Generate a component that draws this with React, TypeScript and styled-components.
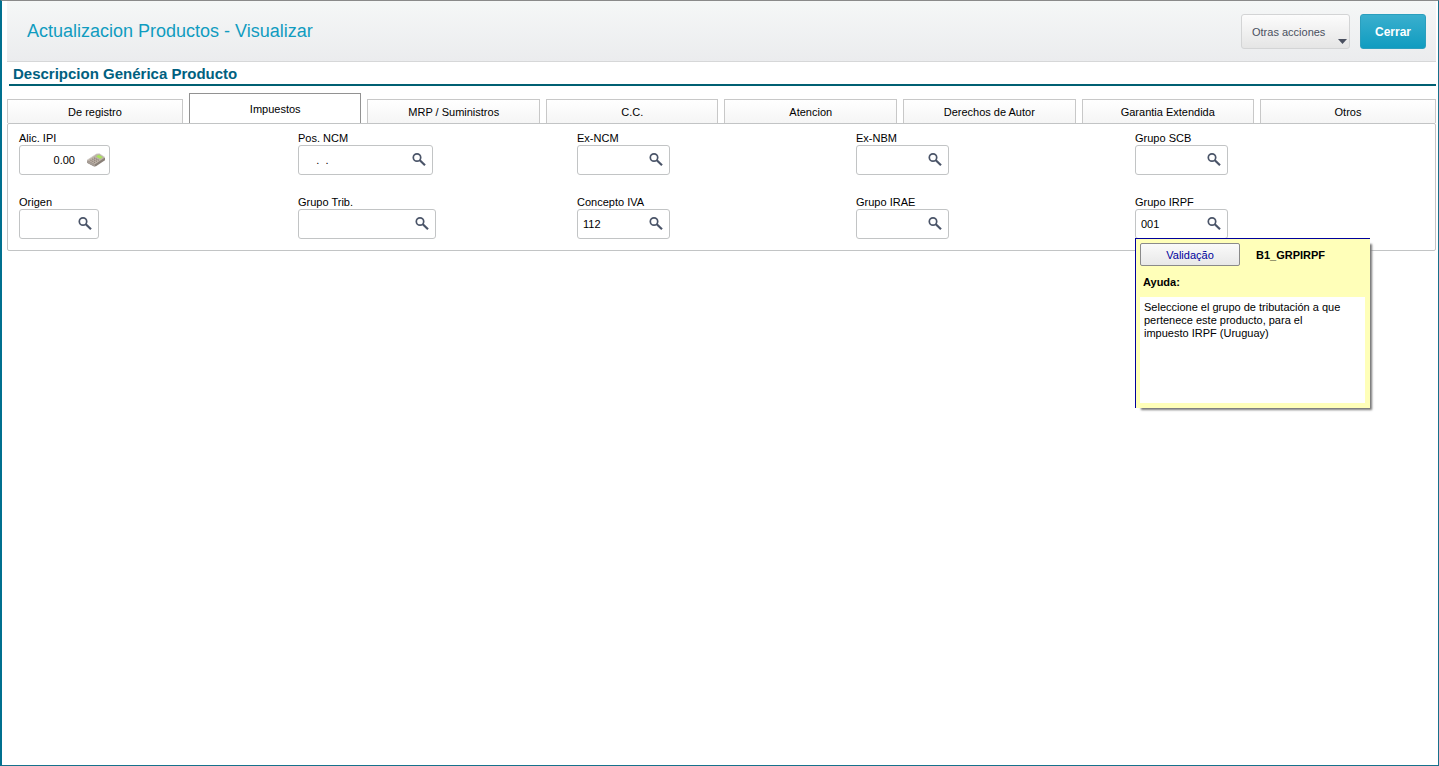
import React from "react";
import styled, { createGlobalStyle, css } from "styled-components";

const GlobalStyle = createGlobalStyle`
  *, *::before, *::after { box-sizing: border-box; }
  body { margin: 0; background: #fff; }
  body, button, input, textarea { font-family: "Liberation Sans", Arial, sans-serif; }
`;

const Window = styled.div`
  display: flex;
  flex-direction: column;
  min-height: 100vh;
  padding: 0 2px 0 5px;
  border: 1px solid #17718c;
  border-top-color: #8a8a8a;
  border-left: 2px solid #00708f;
  background: #fff;
  color: #000;
  font-size: 11px;
`;

const Header = styled.header`
  display: flex;
  align-items: center;
  gap: 10px;
  height: 61px;
  padding: 0 10px 0 20px;
  border-bottom: 1px solid #d6d7d8;
  background: linear-gradient(#f5f7f7, #ebecee);
`;

const Title = styled.h1`
  flex: 1;
  margin: 0;
  font-size: 18px;
  line-height: 22px;
  font-weight: 400;
  color: #109cc0;
`;

const HeaderButton = styled.button<{ $primary?: boolean }>`
  display: flex;
  align-items: center;
  justify-content: center;
  height: 35px;
  padding: 2px 12px 0;
  border-radius: 3px;
  font-size: 11px;
  ${(p) =>
    p.$primary
      ? css`
          min-width: 66px;
          border: 1px solid #2b9fbe;
          background: linear-gradient(#3aafce, #109cc0);
          color: #fff;
          font-size: 12px;
          font-weight: 700;
        `
      : css`
          min-width: 109px;
          justify-content: space-between;
          padding: 2px 2px 0 10px;
          border: 1px solid #d3d4d5;
          background: linear-gradient(#fcfcfc, #e5e5e5);
          color: #4a5060;
        `}
`;

const MenuArrow = styled.svg`
  align-self: flex-end;
  margin-bottom: 4px;
`;

const SectionTitle = styled.h2`
  margin: 0 0 0 2px;
  padding: 4px 4px 2px;
  border-bottom: 2px solid #006073;
  font-size: 15px;
  line-height: 16px;
  font-weight: 700;
  color: #006080;
`;

const Tabs = styled.div`
  display: grid;
  grid-template-columns: 1.02fr repeat(6, 1fr) 1.02fr;
  align-items: end;
  gap: 6px;
  padding-top: 7px;
`;

const Tab = styled.button<{ $active: boolean }>`
  height: ${(p) => (p.$active ? 30 : 24)}px;
  padding: 0;
  border: 1px solid ${(p) => (p.$active ? "#929292" : "#c8c8c8")};
  border-bottom: 0;
  background: ${(p) => (p.$active ? "#fff" : "linear-gradient(#fff, #f5f5f5)")};
  color: #000;
  font-size: 11px;
`;

const Panel = styled.section`
  display: grid;
  grid-template-columns: repeat(5, 1fr);
  row-gap: 20px;
  padding: 7px 21px 11px 11px;
  border: 1px solid #c2c4c5;
  border-radius: 2px;
`;

const FieldCell = styled.div`
  position: relative;
`;

const Label = styled.label`
  display: block;
  line-height: 14px;
`;

const FieldBox = styled.div<{ $width: number; $numeric?: boolean }>`
  display: flex;
  align-items: center;
  width: ${(p) => p.$width}px;
  height: 30px;
  padding-right: ${(p) => (p.$numeric ? 3 : 5)}px;
  border: 1px solid #c2c4c5;
  border-radius: 3px;
  background: #fff;
`;

const FieldInput = styled.input<{ $numeric?: boolean }>`
  flex: 1;
  min-width: 0;
  padding: 0 ${(p) => (p.$numeric ? 11 : 5)}px 0 5px;
  border: 0;
  outline: 0;
  background: transparent;
  color: #000;
  font-size: 11px;
  text-align: ${(p) => (p.$numeric ? "right" : "left")};
  white-space: pre;
`;

const IconButton = styled.button`
  display: flex;
  padding: 0;
  border: 0;
  background: none;
`;

const HelpPopup = styled.aside`
  position: absolute;
  top: 43px;
  left: 0;
  z-index: 1;
  width: 235px;
  height: 170px;
  display: flex;
  flex-direction: column;
  padding: 4px 5px 5px 4px;
  border: 1px solid #00009c;
  border-width: 1px 0 0 1px;
  background: #ffffb9;
  box-shadow: 4px 4px 2px -2px #777;
`;

const HelpTop = styled.div`
  display: flex;
  align-items: center;
  gap: 16px;
`;

const HelpButton = styled.button`
  width: 100px;
  height: 23px;
  padding: 0;
  border: 1px solid #8a8a8a;
  border-radius: 2px;
  background: linear-gradient(#fafafa, #e8e8e8);
  color: #00009c;
  font-size: 11px;
`;

const HelpLabel = styled.label`
  padding: 9px 3px 8px;
  line-height: 14px;
  font-weight: 700;
`;

const HelpText = styled.textarea`
  flex: 1;
  padding: 4px;
  border: 0;
  outline: 0;
  resize: none;
  background: #fff;
  color: #000;
  font-size: 11px;
  line-height: 13px;
`;

const SearchIcon = () => (
  <svg width="16" height="16" viewBox="0 0 16 16" fill="none" aria-hidden="true">
    <circle cx="6" cy="5.5" r="3.7" stroke="#4a5468" strokeWidth="1.7" />
    <path d="M8.8 8.3l5.2 4.9" stroke="#4a5468" strokeWidth="2.2" />
  </svg>
);

const CalculatorIcon = () => (
  <svg width="20" height="16" viewBox="0 0 20 16" aria-hidden="true">
    <path d="M1 8.4v2.4l7 3.8 2-.4 9-6V5.8z" fill="#8a8078" />
    <path d="M1 8.2L10.5 2l3-.2L19 5.4 9 12.2z" fill="#bdb2a8" />
    <path d="M1 8.4l8 3.9v2.2l-8-3.8z" fill="#a79e97" />
    <path d="M1 8.2L10.5 2l3-.2L19 5.4" stroke="#cfcac5" strokeWidth=".7" fill="none" />
    <path d="M10 4.6l2.6-1.8 4.2 2.2-2.6 1.9z" fill="#a9e25c" />
    <path d="M4.4 8.2l4.8 2.4M6.2 7l4.8 2.4M8 5.9l4.8 2.3" stroke="#7d6f66" strokeWidth=".9" strokeDasharray="1.3 .7" />
  </svg>
);

type Field = {
  id: string;
  label: string;
  width: number;
  value?: string;
  numeric?: boolean;
  help?: boolean;
};

const fields: Field[] = [
  { id: "ipi", label: "Alic. IPI", width: 91, value: "0.00", numeric: true },
  { id: "posncm", label: "Pos. NCM", width: 135, value: "    .  ." },
  { id: "exncm", label: "Ex-NCM", width: 93 },
  { id: "exnbm", label: "Ex-NBM", width: 93 },
  { id: "scb", label: "Grupo SCB", width: 93 },
  { id: "origen", label: "Origen", width: 80 },
  { id: "trib", label: "Grupo Trib.", width: 138 },
  { id: "iva", label: "Concepto IVA", width: 93, value: "112" },
  { id: "irae", label: "Grupo IRAE", width: 93 },
  { id: "irpf", label: "Grupo IRPF", width: 93, value: "001", help: true },
];

const tabs = [
  "De registro",
  "Impuestos",
  "MRP / Suministros",
  "C.C.",
  "Atencion",
  "Derechos de Autor",
  "Garantia Extendida",
  "Otros",
];

const helpText =
  "Seleccione el grupo de tributación a que\npertenece este producto, para el\nimpuesto IRPF (Uruguay)";

export default function App() {
  return (
    <>
      <GlobalStyle />
      <Window>
        <Header>
          <Title>Actualizacion Productos - Visualizar</Title>
          <HeaderButton type="button" aria-haspopup="menu">
            Otras acciones
            <MenuArrow width="9" height="5" viewBox="0 0 9 5" aria-hidden="true">
              <path d="M0 0h9L4.5 5z" fill="#4a5060" />
            </MenuArrow>
          </HeaderButton>
          <HeaderButton type="button" $primary>
            Cerrar
          </HeaderButton>
        </Header>
        <SectionTitle>Descripcion Genérica Producto</SectionTitle>
        <Tabs role="tablist">
          {tabs.map((name) => (
            <Tab key={name} type="button" role="tab" aria-selected={name === "Impuestos"} $active={name === "Impuestos"}>
              {name}
            </Tab>
          ))}
        </Tabs>
        <Panel role="tabpanel" aria-label="Impuestos">
          {fields.map((f) => (
            <FieldCell key={f.id}>
              <Label htmlFor={f.id}>{f.label}</Label>
              <FieldBox $width={f.width} $numeric={f.numeric}>
                <FieldInput id={f.id} readOnly value={f.value ?? ""} $numeric={f.numeric} />
                <IconButton type="button" aria-label={f.numeric ? "Calculadora" : "Buscar"}>
                  {f.numeric ? <CalculatorIcon /> : <SearchIcon />}
                </IconButton>
              </FieldBox>
              {f.help && (
                <HelpPopup>
                  <HelpTop>
                    <HelpButton type="button">Validação</HelpButton>
                    <strong>B1_GRPIRPF</strong>
                  </HelpTop>
                  <HelpLabel htmlFor="ayuda">Ayuda:</HelpLabel>
                  <HelpText id="ayuda" readOnly value={helpText} />
                </HelpPopup>
              )}
            </FieldCell>
          ))}
        </Panel>
      </Window>
    </>
  );
}
